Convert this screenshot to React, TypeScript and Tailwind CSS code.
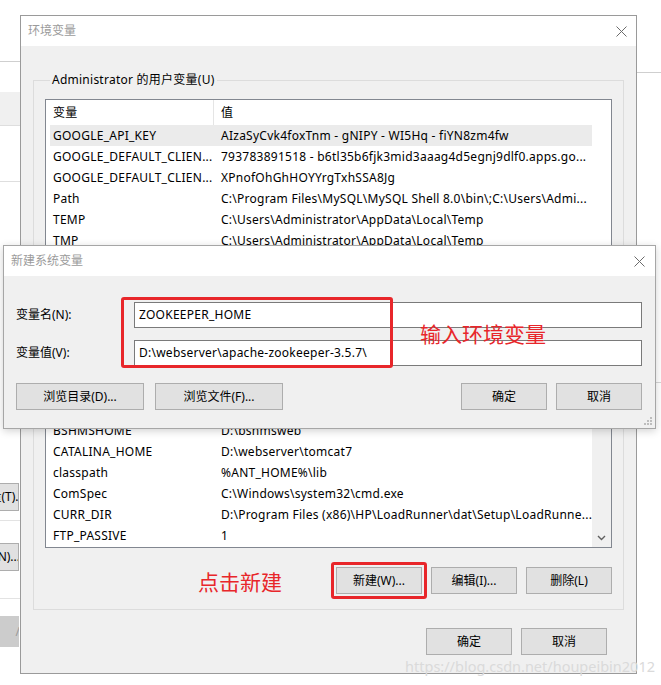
import React from 'react';

type Row = { name: string; value: string; selected?: boolean };

const userVars: Row[] = [
  { name: 'GOOGLE_API_KEY', value: 'AIzaSyCvk4foxTnm - gNIPY - WI5Hq - fiYN8zm4fw', selected: true },
  { name: 'GOOGLE_DEFAULT_CLIEN...', value: '793783891518 - b6tl35b6fjk3mid3aaag4d5egnj9dlf0.apps.go...' },
  { name: 'GOOGLE_DEFAULT_CLIEN...', value: 'XPnofOhGhHOYYrgTxhSSA8Jg' },
  { name: 'Path', value: 'C:\\Program Files\\MySQL\\MySQL Shell 8.0\\bin\\;C:\\Users\\Admi...' },
  { name: 'TEMP', value: 'C:\\Users\\Administrator\\AppData\\Local\\Temp' },
  { name: 'TMP', value: 'C:\\Users\\Administrator\\AppData\\Local\\Temp' },
];

const systemVars: Row[] = [
  { name: 'ANT_HOME', value: 'D:\\webserver\\apache-ant' },
  { name: 'AVE_HOME', value: 'D:\\tools' },
  { name: 'BSHMSHOME', value: 'D:\\bshmsweb' },
  { name: 'CATALINA_HOME', value: 'D:\\webserver\\tomcat7' },
  { name: 'classpath', value: '%ANT_HOME%\\lib' },
  { name: 'ComSpec', value: 'C:\\Windows\\system32\\cmd.exe' },
  { name: 'CURR_DIR', value: 'D:\\Program Files (x86)\\HP\\LoadRunner\\dat\\Setup\\LoadRunne...' },
  { name: 'FTP_PASSIVE', value: '1' },
];

const CloseX: React.FC = () => (
  <svg width="11" height="11" viewBox="0 0 11 11">
    <path d="M0.5 0.5 L10.5 10.5 M10.5 0.5 L0.5 10.5" stroke="#6b6b6b" strokeWidth="1" fill="none" />
  </svg>
);

const WinButton: React.FC<{ label: string; className?: string }> = ({ label, className }) => (
  <div
    className={`h-[27px] flex items-center justify-center bg-[#e1e1e1] border border-[#adadad] text-[12px] text-black ${className ?? ''}`}
  >
    {label}
  </div>
);

const VarList: React.FC<{ rows: Row[]; heightClass: string; scrollbar?: boolean }> = ({ rows, heightClass, scrollbar }) => (
  <div className={`${heightClass} border border-[#828790] bg-white flex overflow-hidden tracking-[0.25px]`}>
    <div className="w-[546px] flex flex-col">
      <div className="h-[25px] flex items-center shrink-0">
        <div className="w-[168px] h-full pl-[7px] flex items-center border-r border-[#e5e5e5]">变量</div>
        <div className="pl-[7px]">值</div>
      </div>
      {rows.map((r, i) => (
        <div
          key={i}
          className={`h-[21px] shrink-0 ml-[4px] flex items-center whitespace-nowrap ${r.selected ? 'bg-[#ebebeb]' : ''}`}
        >
          <div className="w-[164px] pl-[3px] overflow-hidden">{r.name}</div>
          <div className="pl-[7px] overflow-hidden">{r.value}</div>
        </div>
      ))}
    </div>
    {scrollbar ? (
      <div className="flex-1 bg-[#f0f0f0] flex flex-col justify-end items-center pb-[6px]">
        <svg width="9" height="6" viewBox="0 0 9 6">
          <path d="M1 1 L4.5 4.5 L8 1" stroke="#606060" strokeWidth="1.4" fill="none" />
        </svg>
      </div>
    ) : (
      <div className="flex-1" />
    )}
  </div>
);

export default function App() {
  return (
    <div
      className="relative w-[661px] h-[685px] bg-white overflow-hidden text-[12px] text-black"
      style={{ fontFamily: '"Noto Sans", "Noto Sans CJK SC", sans-serif' }}
    >
      {/* window behind, left */}
      <div className="absolute left-0 top-0 w-[20px] h-[685px] overflow-hidden flex flex-col">
        <div className="h-[62px] border-b border-[#cfcfcf]" />
        <div className="h-[30px]" />
        <div className="h-[34px] bg-[#f0f0f0] border-b border-[#dedede]" />
        <div className="h-[56px] border-b border-[#dedede]" />
        <div className="h-[301px]" />
        <div className="h-[28px] bg-[#e1e1e1] border-y border-r border-[#adadad] w-[19px] flex items-center justify-end overflow-hidden">
          <span className="whitespace-nowrap -mr-[7px]">量(T)...</span>
        </div>
        <div className="h-[10px] border-b border-[#e3e3e3]" />
        <div className="h-[22px]" />
        <div className="h-[28px] bg-[#e1e1e1] border-y border-r border-[#adadad] w-[19px] flex items-center justify-end overflow-hidden">
          <span className="whitespace-nowrap -mr-[2px]">N)...</span>
        </div>
        <div className="h-[28px] border-b border-[#e3e3e3]" />
        <div className="h-[17px]" />
        <div className="h-[31px] bg-[#cccccc] w-[19px] flex items-center justify-end overflow-hidden">
          <span className="text-[#9a9a9a] -mr-[1px]">/</span>
        </div>
      </div>

      {/* window behind, right */}
      <div className="absolute left-[636px] top-[72px] w-[25px] h-[600px] border-t border-[#cfcfcf] flex flex-col">
        <div className="h-[310px] border-b border-[#d6d6d6]" />
      </div>

      {/* 环境变量 dialog */}
      <div className="absolute left-[20px] top-[15px] w-[617px] h-[659px] border border-[#9a9a9a] flex flex-col bg-[#f0f0f0]">
        <div className="h-[30px] bg-white flex items-center justify-between pl-[7px] pr-[9px] shrink-0">
          <span className="text-[#9b9b9b]">环境变量</span>
          <CloseX />
        </div>
        <div className="flex-1 flex flex-col px-[12px] pt-[26px]">
          <fieldset className="border border-[#dcdcdc] px-[11px] pt-[11px] pb-[10px]">
            <legend className="ml-[5px] px-[2px] leading-[16px] tracking-[0.25px]">Administrator 的用户变量(U)</legend>
            <VarList rows={userVars} heightClass="h-[175px]" />
            <div className="mt-[10px] flex justify-end gap-[9px]">
              <WinButton label="新建(N)..." className="w-[86px]" />
              <WinButton label="编辑(E)..." className="w-[86px]" />
              <WinButton label="删除(D)" className="w-[86px]" />
            </div>
          </fieldset>

          <fieldset className="mt-[3px] border border-[#dcdcdc] px-[11px] pt-[11px] pb-[15px]">
            <legend className="ml-[5px] px-[2px] leading-[16px]">系统变量(S)</legend>
            <VarList rows={systemVars} heightClass="h-[196px]" scrollbar />
            <div className="mt-[19px] flex items-center justify-end gap-[9px]">
              <span className="text-[21px] leading-[24px] text-[#e8262a] mr-[45px] mt-[2px]">点击新建</span>
              <div className="relative">
                <WinButton label="新建(W)..." className="w-[86px]" />
                <div className="absolute -inset-[5px] border-[3px] border-[#e8262a] rounded-[3px]" />
              </div>
              <WinButton label="编辑(I)..." className="w-[86px]" />
              <WinButton label="删除(L)" className="w-[86px]" />
            </div>
          </fieldset>

          <div className="mt-[18px] mr-[17px] flex justify-end gap-[9px]">
            <WinButton label="确定" className="w-[86px]" />
            <WinButton label="取消" className="w-[86px]" />
          </div>
        </div>
      </div>

      {/* 新建系统变量 dialog */}
      <div className="absolute left-[3px] top-[245px] w-[653px] h-[184px] border border-[#a6a6a6] flex flex-col bg-[#f0f0f0] shadow-[0_2px_8px_rgba(0,0,0,0.18)]">
        <div className="h-[30px] bg-white flex items-center justify-between pl-[7px] pr-[10px] shrink-0">
          <span className="text-[#9b9b9b]">新建系统变量</span>
          <CloseX />
        </div>
        <div className="relative flex-1 flex flex-col pl-[12px] pr-[13px] pt-[26px]">
          <div className="flex items-center">
            <div className="w-[118px]">变量名(N):</div>
            <div className="flex-1 h-[26px] border border-[#7a7a7a] bg-white flex items-center pl-[4px] tracking-[0.25px]">ZOOKEEPER_HOME</div>
          </div>
          <div className="flex items-center mt-[12px]">
            <div className="w-[118px]">变量值(V):</div>
            <div className="flex-1 h-[26px] border border-[#7a7a7a] bg-white flex items-center pl-[4px] tracking-[0.25px]">
              D:\webserver\apache-zookeeper-3.5.7\
            </div>
          </div>
          <div className="mt-[17px] flex gap-[11px]">
            <WinButton label="浏览目录(D)..." className="w-[128px]" />
            <WinButton label="浏览文件(F)..." className="w-[128px]" />
            <div className="flex-1" />
            <div className="flex gap-[9px]">
              <WinButton label="确定" className="w-[86px]" />
              <WinButton label="取消" className="w-[86px]" />
            </div>
          </div>

          {/* annotations */}
          <div className="absolute left-[117px] top-[21px] w-[272px] h-[71px] border-[3px] border-[#e8262a] rounded-[3px]" />
          <div className="absolute left-[416px] top-[46px] text-[21px] leading-[24px] text-[#e8262a]">输入环境变量</div>

          {/* size grip */}
          <svg className="absolute right-[2px] bottom-[2px]" width="10" height="10" viewBox="0 0 10 10">
            <rect x="7" y="1" width="2" height="2" fill="#bdbdbd" />
            <rect x="4" y="4" width="2" height="2" fill="#bdbdbd" />
            <rect x="7" y="4" width="2" height="2" fill="#bdbdbd" />
            <rect x="1" y="7" width="2" height="2" fill="#bdbdbd" />
            <rect x="4" y="7" width="2" height="2" fill="#bdbdbd" />
            <rect x="7" y="7" width="2" height="2" fill="#bdbdbd" />
          </svg>
        </div>
      </div>

      {/* watermark */}
      <div className="absolute right-[6px] top-[656px] text-[14.5px] leading-[20px] text-[#dadada]">
        https://blog.csdn.net/houpeibin2012
      </div>
    </div>
  );
}
